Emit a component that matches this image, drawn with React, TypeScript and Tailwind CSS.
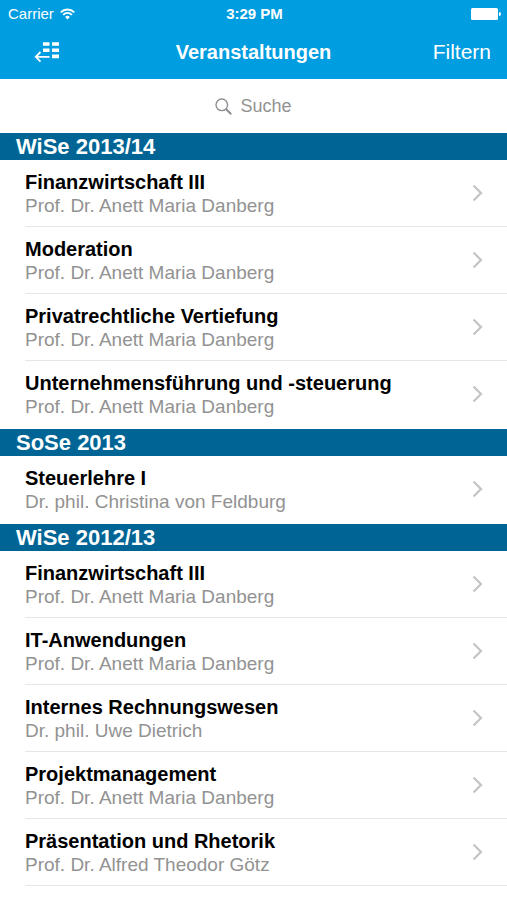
import React from 'react'

const semesters = [
  {
    name: 'WiSe 2013/14',
    courses: [
      { title: 'Finanzwirtschaft III', teacher: 'Prof. Dr. Anett Maria Danberg' },
      { title: 'Moderation', teacher: 'Prof. Dr. Anett Maria Danberg' },
      { title: 'Privatrechtliche Vertiefung', teacher: 'Prof. Dr. Anett Maria Danberg' },
      { title: 'Unternehmensführung und -steuerung', teacher: 'Prof. Dr. Anett Maria Danberg' },
    ],
  },
  {
    name: 'SoSe 2013',
    courses: [{ title: 'Steuerlehre I', teacher: 'Dr. phil. Christina von Feldburg' }],
  },
  {
    name: 'WiSe 2012/13',
    courses: [
      { title: 'Finanzwirtschaft III', teacher: 'Prof. Dr. Anett Maria Danberg' },
      { title: 'IT-Anwendungen', teacher: 'Prof. Dr. Anett Maria Danberg' },
      { title: 'Internes Rechnungswesen', teacher: 'Dr. phil. Uwe Dietrich' },
      { title: 'Projektmanagement', teacher: 'Prof. Dr. Anett Maria Danberg' },
      { title: 'Präsentation und Rhetorik', teacher: 'Prof. Dr. Alfred Theodor Götz' },
    ],
  },
]

function StatusBar() {
  return (
    <div className="grid grid-cols-3 items-center h-7 pl-2 pr-1.5 text-[15px]">
      <div className="flex items-center gap-1.5">
        <span>Carrier</span>
        <svg width="15" height="12" viewBox="0 0 15 12" fill="none" stroke="currentColor" strokeWidth="1.8">
          <path d="M0.7 4.3a9.6 9.6 0 0 1 13.6 0" />
          <path d="M3.1 6.8a6.2 6.2 0 0 1 8.8 0" />
          <path d="M7.5 11.4 5.1 9a3.4 3.4 0 0 1 4.8 0z" fill="currentColor" stroke="none" />
        </svg>
      </div>
      <span className="text-center font-bold">3:29 PM</span>
      <svg className="justify-self-end" width="30" height="12" viewBox="0 0 30 12" fill="currentColor">
        <rect width="27" height="12" rx="1.5" />
        <path d="M28 4a2 2 0 0 1 0 4z" />
      </svg>
    </div>
  )
}

function NavBar() {
  return (
    <div className="grid grid-cols-[1fr_auto_1fr] items-center h-[51px] px-4 pb-1 text-[20px]">
      <button type="button" aria-label="Zurück zum Menü" className="justify-self-start pl-[18px]">
        <svg width="26" height="22" viewBox="0 0 26 22" fill="currentColor">
          <path d="M9 1.2h6.5v3.6H9zM18 1.2h7v3.6h-7zM9 7.4h6.5V11H9zM18 7.4h7V11h-7zM18 13.6h7v3.6h-7z" />
          <path d="M6.5 11 1.8 15.8l4.7 4.8M2 15.8h13.5" fill="none" stroke="currentColor" strokeWidth="1.8" />
        </svg>
      </button>
      <h1 className="font-bold">Veranstaltungen</h1>
      <button type="button" className="justify-self-end text-[21px]">Filtern</button>
    </div>
  )
}

function CourseRow({ title, teacher }: { title: string; teacher: string }) {
  return (
    <li className="pl-[25px]">
      <a href="#" className="flex items-center justify-between h-[67px] pr-6 border-b border-[#e6e6e6]">
        <div className="pt-0.5">
          <h3 className="text-[20px] leading-6 font-bold text-black">{title}</h3>
          <p className="text-[19px] leading-6 text-[#929292]">{teacher}</p>
        </div>
        <svg width="11" height="18" viewBox="0 0 11 18" fill="none" stroke="#c4c4c6" strokeWidth="2.2">
          <path d="M1.5 1.5 9 9l-7.5 7.5" />
        </svg>
      </a>
    </li>
  )
}

export default function App() {
  return (
    <div className="min-h-screen bg-white font-['Liberation_Sans',Arial,sans-serif]">
      <header className="bg-[#009de0] text-white">
        <StatusBar />
        <NavBar />
      </header>

      <label className="flex items-center justify-center gap-2 h-[54px] text-[#8e8e93]">
        <svg width="17" height="17" viewBox="0 0 17 17" fill="none" stroke="currentColor" strokeWidth="1.4">
          <circle cx="6.8" cy="6.8" r="5.8" />
          <path d="m11 11 5.2 5.2" strokeWidth="2" />
        </svg>
        <input
          type="text"
          aria-label="Suche"
          placeholder="Suche"
          className="field-sizing-content text-[18px] outline-none placeholder:text-[#929292]"
        />
      </label>

      <main>
        {semesters.map((semester) => (
          <section key={semester.name} className="[&:not(:last-child)_li:last-child_a]:border-transparent">
            <h2 className="h-[27px] pl-4 text-[22px] leading-[27px] font-bold text-white bg-[#006595]">
              {semester.name}
            </h2>
            <ul className="pb-px">
              {semester.courses.map((course) => (
                <CourseRow key={course.title} title={course.title} teacher={course.teacher} />
              ))}
            </ul>
          </section>
        ))}
      </main>
    </div>
  )
}
